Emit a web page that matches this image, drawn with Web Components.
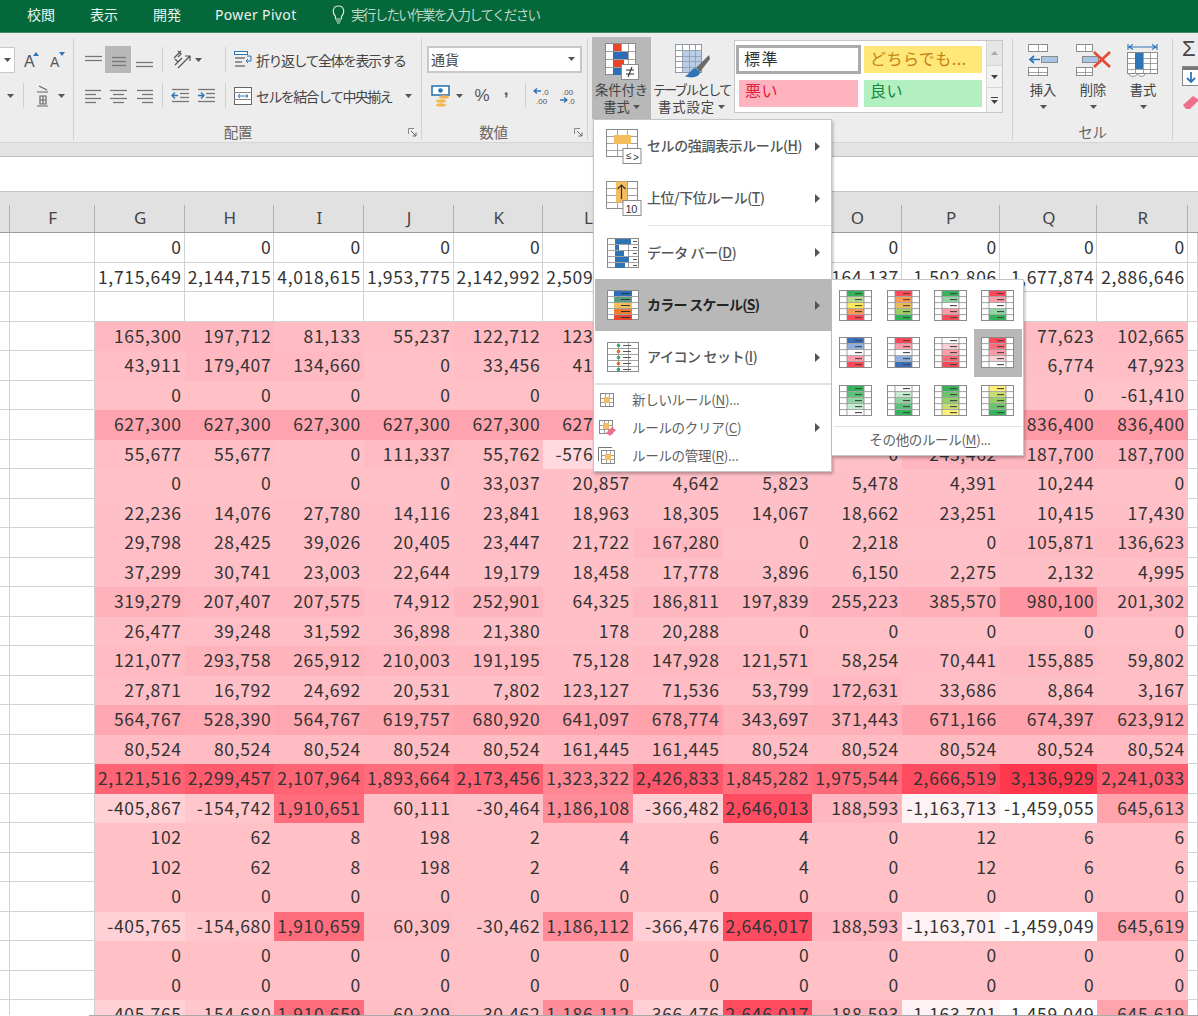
<!DOCTYPE html>
<html lang="ja">
<head>
<meta charset="utf-8">
<title>Excel</title>
<style>
html,body{margin:0;padding:0;background:#fff;overflow:hidden;height:1016px}
x-app{--f:"Noto Sans CJK JP","Noto Sans",sans-serif;font-family:var(--f);color:#444}
</style>
</head>
<body>
<x-app></x-app>
<script>
const G='#8b8b8b';
const svg=(w,h,b,st='')=>`<svg width="${w}" height="${h}" viewBox="0 0 ${w} ${h}" style="display:block;flex:none;${st}">${b}</svg>`;
const lines=(arr,c='#777')=>arr.map(a=>`<path d="M${a[0]} ${a[2]+.5}H${a[1]}" stroke="${a[3]||c}" stroke-width="1.3"/>`).join('');
const caret=(c='#555')=>svg(7,4,`<path d="M0 0H7L3.5 4Z" fill="${c}"/>`);
const gridLines=(x,y,w,h,cols,rows,c=G)=>{
  let s=`<rect x="${x+.5}" y="${y+.5}" width="${w-1}" height="${h-1}" fill="#fff" stroke="${c}"/>`;
  for(let i=1;i<cols;i++){const X=x+Math.round(w*i/cols)+.5;s+=`<path d="M${X} ${y}V${y+h}" stroke="${c}" stroke-width=".8"/>`}
  for(let i=1;i<rows;i++){const Y=y+Math.round(h*i/rows)+.5;s+=`<path d="M${x} ${Y}H${x+w}" stroke="${c}" stroke-width=".8"/>`}
  return s};
function def(name,css,html,disp='block'){
  customElements.define(name,class extends HTMLElement{
    constructor(){super();const r=this.attachShadow({mode:'open'});
      r.innerHTML=`<style>:host{display:${disp};box-sizing:border-box}*{box-sizing:border-box}${css}</style>`+(typeof html==='function'?html(this):html)}
  })}

/* ---------- icons ---------- */
const ICON={
 cf:svg(36,37,gridLines(1,0,31,32,4,4)+
   `<rect x="9" y="1" width="8" height="7" fill="#e8442a"/>
    <rect x="9" y="9" width="15" height="7" fill="#2f6db5"/><rect x="9" y="17" width="11" height="7" fill="#e8442a"/><rect x="9" y="25" width="8" height="7" fill="#2f6db5"/>
    <rect x="17.5" y="21.5" width="17" height="15" fill="#fff" stroke="${G}"/>
    <path d="M22 27H30M22 31H30M28 24L24 34" stroke="#333" stroke-width="1.1" fill="none"/>`),
 tbl:svg(36,36,gridLines(1,1,27,29,4,5,'#8e99a8')+
   `<rect x="8" y="7" width="20" height="23" fill="#b9cde6"/>`+gridLines(1,1,27,29,4,5,'#8e99a8').replace(/fill="#fff"/,'fill="none"')+
   `<path d="M35 12L22 25L26 29L36 16Z" fill="#6b6b6b"/><path d="M21 25C16 27 16 31 11 33C17 36 26 34 26 29Z" fill="#2e75b6"/>`),
 ins:svg(32,34,gridLines(1,1,20,8,2,1)+gridLines(1,24,20,9,2,2)+gridLines(14,13,17,7,2,1)+
   `<rect x="15" y="14" width="15" height="5" fill="#a9c4e4"/><path d="M13 16.5H3M7 13L3 16.5L7 20" stroke="#2e75b6" stroke-width="1.7" fill="none"/>`),
 del:svg(37,34,gridLines(1,1,17,8,2,1)+gridLines(1,24,17,9,2,2)+gridLines(7,13,17,7,2,1)+
   `<rect x="8" y="14" width="15" height="5" fill="#a9c4e4"/><path d="M19 9L35 24M35 9L19 24" stroke="#e8482f" stroke-width="2.6"/>`),
 fmt:svg(34,36,`<path d="M2 1V7M31 1V7M3 4H30M7 1.5L3 4L7 6.5M26 1.5L30 4L26 6.5" stroke="#2e75b6" stroke-width="1.1" fill="none"/>`+gridLines(1,9,31,22,4,4)+
   `<rect x="9" y="10" width="8" height="16" fill="#2e75b6"/><path d="M3 31C3 34 11 34 11 31M12 31C12 34 19 34 19 31" stroke="${G}" fill="#fff"/>`),
 hl:svg(37,36,gridLines(1,1,32,28,3,4)+`<rect x="9" y="7" width="17" height="9" fill="#f4bd5f"/>
   <rect x="18" y="20.5" width="18" height="15" fill="#fff" stroke="${G}"/><text x="21" y="31" font-size="10" fill="#333" font-family="Liberation Sans">≤</text><text x="28" y="33" font-size="10" fill="#333" font-family="Liberation Sans">&gt;</text>`),
 top:svg(37,36,gridLines(1,1,32,28,3,4)+`<rect x="11" y="1.5" width="11" height="21" fill="#f4bd5f"/><path d="M16.5 19V5M12.5 9L16.5 5L20.5 9" stroke="#333" stroke-width="1.2" fill="none"/>
   <rect x="18" y="20.5" width="18" height="15" fill="#fff" stroke="${G}"/><text x="20.5" y="32.5" font-size="11" fill="#333" font-family="Liberation Sans">10</text>`),
 bar:svg(34,32,gridLines(1,1,32,30,3,5)+[16,4,9,14,10].map((w,i)=>`<rect x="9" y="${2+i*6}" width="${w}" height="5" fill="#2e75b6"/><path d="M27 ${4.5+i*6}H31" stroke="#555"/>`).join('')),
 scale:svg(34,32,gridLines(1,1,32,30,3,5)+['#2e6fbb','#5a9e80','#f2bd5c','#ee7a2e','#e4472f'].map((c,i)=>`<rect x="8" y="${2+i*6}" width="18" height="5" fill="${c}"/><path d="M15 ${4.5+i*6}H24" stroke="#333"/>`).join('')),
 iconset:svg(34,32,gridLines(1,1,32,30,3,5)+['#3fa373','#ee6a1e','#3fa373','#ee6a1e','#3fa373'].map((c,i)=>`<circle cx="12.5" cy="${4.5+i*6}" r="1.8" fill="${c}"/><path d="M17 ${4.5+i*6}H25" stroke="#555"/>`).join('')),
 nw:svg(16,16,gridLines(1,1,14,14,3,3,'#888')+`<rect x="5" y="5" width="6" height="6" fill="#f4bd5f"/>`),
 clr:svg(18,18,gridLines(1,1,14,14,3,3,'#888')+`<rect x="5" y="4" width="6" height="6" fill="#f4bd5f"/><path d="M8 14L14 8L18 11L12 17Z" fill="#ee6f8d"/>`),
 mgr:svg(18,18,`<path d="M.5 14V.5H14" stroke="#777" fill="none"/>`+gridLines(3,3,14,14,3,3,'#888')+`<rect x="7" y="7" width="6" height="6" fill="#f4bd5f"/>`),
};
const mini=(cs)=>svg(33,31,`<rect x=".5" y=".5" width="32" height="30" fill="#fff" stroke="#8a8a8a"/>`+
  cs.map((c,i)=>{const y=1+i*6;return `<rect x="8" y="${y}" width="17" height="5.2" fill="${c}"/><path d="M1 ${y+5.6}H32" stroke="#8a8a8a" stroke-width=".8"/><path d="M16 ${y+2.6}H23" stroke="#444" stroke-width="1.1"/>`}).join('')+
  `<path d="M8 1V30M25 1V30" stroke="#8a8a8a" stroke-width=".8"/>`);

/* row helper: places items in flow with computed gaps, from the group's left x */
const row=(start,items)=>{let x=start,h='';for(const [ax,w,c,st] of items){h+=`<span style="flex:none;display:flex;align-items:center;justify-content:${w>60?'flex-start':'center'};height:27px;margin-left:${ax-x}px;width:${w}px;${st||''}">${c}</span>`;x=ax+w}return `<div class="row">${h}</div>`};
const sep=`<i style="display:block;width:1px;height:25px;background:#cfcfcf"></i>`;
const rowCss=`.row{display:flex;height:27px;align-items:center;white-space:nowrap}
.rows{display:flex;flex-direction:column;gap:9px;padding-top:8px}
.t{font-size:14px;color:#444}`;

/* ---------- generic parts ---------- */
def('x-titlebar',`:host{height:33px;background:#05683a;color:#eaf3ee;display:flex;align-items:center;font-size:14px;padding:0 0 4px 27px;border-bottom:1px solid #3f8a63}
span{flex:none;white-space:nowrap}`,
`<span style="width:63px">校閲</span><span style="width:63px">表示</span><span style="width:62px">開発</span><span style="width:116px;font-family:'Noto Sans',sans-serif;letter-spacing:.35px">Power Pivot</span>
${svg(15,20,`<path d="M4.5 12.5C1 9 1.5 2 7.5 2S14 9 10.5 12.5V15H4.5ZM5 17H10M6 19H9" stroke="#dbe8e0" fill="none" stroke-width="1.1"/>`,'margin-right:5px')}
<span style="font-size:13.5px;letter-spacing:-1.68px;color:#bcd6c7">実行したい作業を入力してください</span>`,'flex');

def('x-rgroup',`:host{flex:none;margin:5px 0 3px;height:102px;border-right:1px solid #d2d2d2;position:relative;display:flex;flex-direction:column}
.c{flex:1;min-height:0}
.l{height:18px;text-align:center;font-size:14.5px;color:#666;line-height:20px;letter-spacing:-.2px}
.k{position:absolute;right:4px;bottom:3px;display:block}`,
t=>`<div class="c"><slot></slot></div><div class="l" style="padding-right:${t.getAttribute('lpad')||0}px">${t.getAttribute('label')||''}</div>${t.hasAttribute('launcher')?svg(9,9,`<path d="M.5 6V.5H6" stroke="#888" fill="none"/><path d="M3 3L8 8M8 4.5V8H4.5" stroke="#666" fill="none"/>`,'').replace('<svg','<svg class="k"'):''}`);

def('x-bigbtn',`:host{flex:none;display:flex;flex-direction:column;align-items:center;font-size:13.3px;line-height:17px;color:#444;height:82px;text-align:center;white-space:nowrap}
:host([on]){background:#b8b8b8}
.i{height:44px;display:flex;align-items:flex-start;padding-top:6px;justify-content:center;flex:none}
.b{display:flex;align-items:center;gap:3px;justify-content:center;height:17px}`,
t=>{const a=(t.getAttribute('text')||'').split('|');const ls=(t.getAttribute('ls')||'0|0').split('|');const k=ICON[t.getAttribute('icon')];const lc=t.hasAttribute('lonecaret');
 return `<div class="i">${k}</div>`+a.map((s,i)=>`<div class="b" style="letter-spacing:${ls[i]||0}px">${s}${i==a.length-1&&!lc?caret():''}</div>`).join('')+(lc?`<div class="b">${caret()}</div>`:'')});

def('x-gallery',`:host{flex:none;width:269px;height:73px;margin:2px 0 0 -1px;background:#fff;border:1px solid #c6c6c6;display:flex}
.g{flex:1;display:grid;grid-template-columns:125px 118px;grid-template-rows:29px 27px;column-gap:3px;row-gap:6px;padding:4px 0 0 1px;font-size:16px;line-height:1}
.g div{display:flex;align-items:center;padding:0 0 4px 6px;white-space:nowrap}
.n{border:3px solid #ababab;background:#fff;color:#333;padding:0 0 3px 5px!important;letter-spacing:1.6px}
.y{background:#ffe877;color:#c4800f;margin:1px 0 1px;letter-spacing:.45px}
.b{background:#ffb3bf;color:#e0213c;margin-left:3px;margin-right:3px;letter-spacing:.5px;padding-bottom:8px!important}
.o{background:#b2f0c2;color:#18873a;letter-spacing:.5px;padding-bottom:8px!important}
.s{width:16px;border-left:1px solid #d6d6d6;display:flex;flex-direction:column;flex:none}
.s span{display:flex;align-items:center;justify-content:center;flex-direction:column;gap:2px;border-bottom:1px solid #d6d6d6;background:#f2f2f2}`,
`<div class="g"><div class="n">標準</div><div class="y">どちらでも...</div><div class="b">悪い</div><div class="o">良い</div></div>
<div class="s"><span style="height:25px;background:#e6e6e6">${svg(7,4,'<path d="M0 4H7L3.5 0Z" fill="#aaa"/>')}</span><span style="height:22px">${caret('#444')}</span><span style="height:24px;border:0"><i style="display:block;width:7px;height:1px;background:#444"></i>${caret('#444')}</span></div>`);

def('x-select',`:host{display:flex;align-items:center;justify-content:space-between;height:27px;width:155px;background:#fff;border:2px solid #c8c8c8;font-size:14px;padding:0 5px 2px 2px;color:#444}`,
`<span><slot></slot></span>${caret()}`);

/* ---------- ribbon ---------- */
const A=(up)=>svg(15,16,`<text x="0" y="15" font-size="${up?16:14}" fill="#555" font-family="Liberation Sans">A</text><path d="${up?'M9 4L12 0L15 4Z':'M9 0H15L12 4Z'}" fill="#2e75b6"/>`);
const ribbonFont=`<div class="rows">`+row(0,[[0,15,`<span style="width:15px;height:26px;background:#fff;border:1.5px solid #c8c8c8;border-left:0;display:flex;align-items:center;justify-content:center">${caret()}</span>`],[24,15,A(true)],[50,15,A(false)]])+
 row(0,[[6,8,caret()],[23,1,sep],[36,13,svg(13,22,`<path d="M3 1L11 5M1 7H12M4 11H10V19H4ZM4 15H10M7 11V19M1 21H12" stroke="#666" fill="none" stroke-width="1.2"/>`)],[58,7,caret()]])+`</div>`;
const L=(b)=>svg(19,18,lines(b));
const ribbonAlign=`<div class="rows">`+row(74,[
  [84,18,L([[1,18,5],[1,18,9]])],[105,26,L([[3,17,6],[3,17,10],[3,17,14]]),'background:#b8b8b8'],[135,18,L([[1,18,11],[1,18,15]])],[162,1,sep],
  [172,20,svg(20,20,`<path d="M2 8L9 1M6 1L9 4L6 7M3 9L6 12M10 8L3 15M6 18L18 6M13 6H18V11" stroke="#555" fill="none" stroke-width="1.2"/>`)],[195,7,caret()],[225,1,sep],
  [234,18,svg(18,18,`<rect x=".5" y=".5" width="13" height="3" fill="#fff" stroke="#2e75b6"/><path d="M1 7H11M1 11H8M1 15H11" stroke="#777" stroke-width="1.3"/><path d="M13 5H17V10H12M14 8L12 10L14 12" stroke="#2e75b6" fill="none"/>`)],
  [256,150,`<span class="t" style="letter-spacing:-1.5px">折り返して全体を表示する</span>`]])+
 row(74,[[84,18,L([[1,17,3],[1,12,7],[1,17,11],[1,12,15]])],[109,18,L([[1,18,3],[4,15,7],[1,18,11],[4,15,15]])],[135,18,L([[2,18,3],[7,18,7],[2,18,11],[7,18,15]])],[162,1,sep],
  [171,19,svg(19,18,lines([[1,18,2],[9,18,6],[9,18,10],[1,18,14]])+`<path d="M7 8.5H1M4 5.5L1 8.5L4 11.5" stroke="#2e75b6" fill="none" stroke-width="1.4"/>`)],
  [197,19,svg(19,18,lines([[1,18,2],[9,18,6],[9,18,10],[1,18,14]])+`<path d="M1 8.5H7M4 5.5L7 8.5L4 11.5" stroke="#2e75b6" fill="none" stroke-width="1.4"/>`)],[225,1,sep],
  [234,18,svg(18,18,`<rect x=".5" y=".5" width="17" height="17" fill="#fff" stroke="#666"/><path d="M0 5.5H18M0 12.5H18" stroke="#888"/><path d="M4 9H14M6 7L4 9L6 11M12 7L14 9L12 11" stroke="#2e75b6" fill="none"/>`)],
  [256,140,`<span class="t" style="letter-spacing:-1.6px">セルを結合して中央揃え</span>`],[405,7,caret()]])+`</div>`;
const dec=(flip)=>svg(20,18,`<text x="${flip?3:9}" y="8" font-size="8" fill="#555" font-family="Liberation Sans">${flip?'.00':'.0'}</text><text x="${flip?9:3}" y="17" font-size="8" fill="#555" font-family="Liberation Sans">${flip?'.0':'.00'}</text><path d="${flip?'M1 13H8M5 10.5L8 13L5 15.5':'M8 4H1M4 1.5L1 4L4 6.5'}" stroke="#2e75b6" fill="none" stroke-width="1.3"/>`);
const ribbonNum=`<div class="rows">`+row(422,[[427,155,`<x-select>通貨</x-select>`]])+
 row(422,[[431,19,svg(19,22,`<rect x="1" y="1" width="17" height="9" fill="#fff" stroke="#2e75b6" stroke-width="1.6"/><circle cx="9.5" cy="5.5" r="2.3" fill="#2e75b6"/><ellipse cx="13" cy="12" rx="5" ry="1.7" fill="#f2b84f"/><ellipse cx="10" cy="16" rx="5" ry="1.7" fill="#f2b84f"/><ellipse cx="10" cy="20" rx="5" ry="1.7" fill="#f2b84f"/>`)],[456,7,caret()],
  [473,18,`<span style="font-size:17px;color:#555;font-family:'Liberation Sans'">%</span>`],[502,8,`<span style="font-size:17px;font-weight:700;color:#555;font-family:'Liberation Sans';margin-top:-12px">,</span>`],[525,1,sep],[533,20,dec(false)],[559,20,dec(true)]])+`</div>`;

def('x-ribbon',`:host{height:110px;background:#ededed;display:flex;border-bottom:1px solid #d6d6d6;overflow:hidden;font-family:var(--f)}${rowCss}
.big{display:flex;align-items:flex-start}
.edit{display:flex;flex-direction:column;padding:0 0 0 9px}`,
`<x-rgroup style="width:74px">${ribbonFont}</x-rgroup>
<x-rgroup style="width:348px" label="配置" lpad="19" launcher>${ribbonAlign}</x-rgroup>
<x-rgroup style="width:166px" label="数値" lpad="22" launcher>${ribbonNum}</x-rgroup>
<x-rgroup style="width:425px"><div class="big">
  <x-bigbtn on icon="cf" text="条件付き|書式" style="width:59px;margin:-1px 0 0 4px"></x-bigbtn>
  <x-bigbtn icon="tbl" text="テーブルとして|書式設定" ls="-2.1|.9" style="width:77px;margin:-1px 5px 0 2px"></x-bigbtn>
  <x-gallery></x-gallery></div></x-rgroup>
<x-rgroup style="width:160px" label="セル"><div class="big" style="padding-left:5px">
  <x-bigbtn icon="ins" text="挿入" lonecaret style="width:50px;margin-top:-1px"></x-bigbtn>
  <x-bigbtn icon="del" text="削除" lonecaret style="width:50px;margin-top:-1px"></x-bigbtn>
  <x-bigbtn icon="fmt" text="書式" lonecaret style="width:50px;margin-top:-1px"></x-bigbtn></div></x-rgroup>
<div class="edit"><span style="font-family:'Liberation Sans';font-size:22px;line-height:24px;margin-top:4px;color:#444">Σ</span>
  ${svg(18,20,`<rect x=".5" y=".5" width="17" height="19" fill="#fff" stroke="#888"/><rect x="1" y="1" width="16" height="3" fill="#777"/><path d="M9 6V16M5 12L9 16L13 12" stroke="#2e75b6" stroke-width="1.8" fill="none"/>`,'margin-top:5px')}
  ${svg(18,16,`<path d="M1 11L11 2L17 6L8 15H4Z" fill="#ee6f8d"/>`,'margin-top:8px')}</div>`,'flex');

/* ---------- formula strip ---------- */
def('x-formula',`:host{height:49px;display:flex;flex-direction:column}
.a{height:14px;background:#e3e3e3;border-bottom:1.5px solid #bdbdbd}
.b{flex:1;background:#fff;border-bottom:1.5px solid #c4c4c4}`,`<div class="a"></div><div class="b"></div>`);

/* ---------- sheet ---------- */
const COLS='10px 85px repeat(9,89.67px) 98px 97.5px 90.5px 10px';
const DATA=[
['0','0','0','0','0','0','','','0','0','0','0'],
['1,715,649','2,144,715','4,018,615','1,953,775','2,142,992','2,509,310','','','164,137','1,502,806','1,677,874','2,886,646'],
['','','','','','','','','','','',''],
['165,300','197,712','81,133','55,237','122,712','123,540','','','','','77,623','102,665'],
['43,911','179,407','134,660','0','33,456','41,720','','','','','6,774','47,923'],
['0','0','0','0','0','','','','','','0','-61,410'],
['627,300','627,300','627,300','627,300','627,300','627,300','','','','','836,400','836,400'],
['55,677','55,677','0','111,337','55,762','-576,210','','','0','243,462','187,700','187,700'],
['0','0','0','0','33,037','20,857','4,642','5,823','5,478','4,391','10,244','0'],
['22,236','14,076','27,780','14,116','23,841','18,963','18,305','14,067','18,662','23,251','10,415','17,430'],
['29,798','28,425','39,026','20,405','23,447','21,722','167,280','0','2,218','0','105,871','136,623'],
['37,299','30,741','23,003','22,644','19,179','18,458','17,778','3,896','6,150','2,275','2,132','4,995'],
['319,279','207,407','207,575','74,912','252,901','64,325','186,811','197,839','255,223','385,570','980,100','201,302'],
['26,477','39,248','31,592','36,898','21,380','178','20,288','0','0','0','0','0'],
['121,077','293,758','265,912','210,003','191,195','75,128','147,928','121,571','58,254','70,441','155,885','59,802'],
['27,871','16,792','24,692','20,531','7,802','123,127','71,536','53,799','172,631','33,686','8,864','3,167'],
['564,767','528,390','564,767','619,757','680,920','641,097','678,774','343,697','371,443','671,166','674,397','623,912'],
['80,524','80,524','80,524','80,524','80,524','161,445','161,445','80,524','80,524','80,524','80,524','80,524'],
['2,121,516','2,299,457','2,107,964','1,893,664','2,173,456','1,323,322','2,426,833','1,845,282','1,975,544','2,666,519','3,136,929','2,241,033'],
['-405,867','-154,742','1,910,651','60,111','-30,464','1,186,108','-366,482','2,646,013','188,593','-1,163,713','-1,459,055','645,613'],
['102','62','8','198','2','4','6','4','0','12','6','6'],
['102','62','8','198','2','4','6','4','0','12','6','6'],
['0','0','0','0','0','0','0','0','0','0','0','0'],
['-405,765','-154,680','1,910,659','60,309','-30,462','1,186,112','-366,476','2,646,017','188,593','-1,163,701','-1,459,049','645,619'],
['0','0','0','0','0','0','0','0','0','0','0','0'],
['0','0','0','0','0','0','0','0','0','0','0','0'],
['-405,765','-154,680','1,910,659','60,309','-30,462','1,186,112','-366,476','2,646,017','188,593','-1,163,701','-1,459,049','645,619'],
];
const MIN=-1459055,MAX=3136929;
const colour=s=>{const v=parseInt((s||'0').replace(/,/g,''),10)||0;const f=(v-MIN)/(MAX-MIN);return `rgb(255,${Math.round(255-200*f)},${Math.round(255-178*f)})`};
const sheetHtml=()=>{
 let h=`<div class="hd"><i></i>`+'F G H I J K L M N O P Q R'.split(' ').map(c=>`<b>${c}</b>`).join('')+`<i></i></div><div class="gr">`;
 DATA.forEach((r,ri)=>{
  h+=`<div class="c"></div><div class="c"></div>`;
  r.forEach(v=>{const col=ri>2;h+=`<div class="c${col?' p':''}"${col?` style="background:${colour(v)}"`:''}>${v}</div>`});
  h+=`<div class="c"></div>`;
 });
 return h+`</div><div class="end"><i></i></div>`};
def('x-sheet',`:host{height:825px;overflow:hidden;position:relative;font-family:var(--f);display:flex;flex-direction:column}
.hd{height:41px;flex:none;background:#e1e1e1;display:grid;grid-template-columns:${COLS};align-items:end;border-bottom:1.5px solid #9b9b9b}
.hd b{height:27px;font-weight:400;font-size:17px;font-family:"Noto Sans",sans-serif;line-height:26px;text-align:center;color:#444;border-right:1.5px solid #b1b1b1;padding-left:1.5px}
.hd i{height:27px;border-right:1.5px solid #b1b1b1}.hd i:last-child{border:0}
.gr{height:782px;flex:none;overflow:hidden;display:grid;grid-template-columns:${COLS};grid-auto-rows:29.5px;background:#fff}
.c{border-right:1.5px solid #d2d2d2;border-bottom:1.5px solid #d2d2d2;font-size:17.5px;letter-spacing:.66px;line-height:27.5px;text-align:right;padding-right:2px;color:#333;white-space:nowrap;overflow:hidden}
.c.p{border-color:transparent}
.end{height:2px;flex:none;display:flex}.end i{margin-left:89px;flex:1;background:#a9a9a9}`,sheetHtml());

/* ---------- menus ---------- */
def('x-mi',`:host{display:flex;align-items:center;color:#555;white-space:nowrap;margin-left:1px}
:host([big]){height:52px;font-size:14px;font-weight:500;letter-spacing:-.4px}
:host(:not([big])){height:28px;font-size:13.5px;letter-spacing:-.3px;color:#5f5f5f}
:host([on]){background:#b8b8b8;color:#222;font-weight:700;letter-spacing:-.75px}
.ic{flex:none;display:flex;align-items:center;justify-content:center}
:host([big]) .ic{width:36px;margin:0 6px 0 10px}
:host(:not([big])) .ic{width:18px;margin:0 16px 0 3px}
.tx{padding-bottom:2px}
u{text-underline-offset:2px}
.ar{margin-left:auto;margin-right:11px;flex:none}`,
t=>{const m=(t.getAttribute('text')).match(/^(.*)\((.)\)(.*)$/);
 return `<span class="ic">${ICON[t.getAttribute('icon')]}</span><span class="tx">${m[1]}(<u>${m[2]}</u>)${m[3]}</span>`+(t.hasAttribute('sub')?`<span class="ar">${svg(5,9,'<path d="M0 0L5 4.5L0 9Z" fill="#555"/>')}</span>`:'')});
def('x-cfmenu',`:host{position:absolute;left:593px;top:119px;width:239px;height:353px;background:#fff;border:1px solid #c6c6c6;box-shadow:1px 2px 3px rgba(0,0,0,.28);font-family:var(--f);z-index:5}
.s{height:1.5px;background:#e2e2e2}`,
`<x-mi big icon="hl" sub text="セルの強調表示ルール(H)"></x-mi>
<x-mi big icon="top" sub text="上位/下位ルール(T)"></x-mi>
<div class="s" style="margin:.5px 0 .5px 54px"></div>
<x-mi big icon="bar" sub text="データ バー(D)"></x-mi>
<x-mi big on icon="scale" sub text="カラー スケール(S)" style="margin-top:.5px"></x-mi>
<x-mi big icon="iconset" sub text="アイコン セット(I)"></x-mi>
<div class="s" style="margin:0 0 1px 1px"></div>
<x-mi icon="nw" text="新しいルール(N)..."></x-mi>
<x-mi icon="clr" sub text="ルールのクリア(C)"></x-mi>
<x-mi icon="mgr" text="ルールの管理(R)..."></x-mi>`);
const SC=[
['#33b35a','#b9dd90','#ffeb5a','#ff9a55','#ff4858'],['#ff4858','#ff9a55','#e9ba5c','#9bd060','#33b35a'],['#33b35a','#90d6a2','#ffffff','#ff9aa8','#ff4858'],['#ff4858','#ff9aa8','#ffffff','#90d6a2','#33b35a'],
['#3a6fb8','#8fb0dd','#ffffff','#ff9aa8','#ff4858'],['#ff4858','#ff9aa8','#ffffff','#8fb0dd','#3a6fb8'],['#ffffff','#ffcfd6','#ff9aa8','#ff6a78','#ff4858'],['#ff4858','#ff6a78','#ff9aa8','#ffcfd6','#ffffff'],
['#33b35a','#5cc47a','#90d6a2','#c5ecd1','#ffffff'],['#ffffff','#c5ecd1','#90d6a2','#5cc47a','#33b35a'],['#33b35a','#6cc46a','#94d064','#c8e070','#fff07a'],['#fff07a','#c8e070','#94d064','#6cc46a','#33b35a']];
def('x-scalemenu',`:host{position:absolute;left:832px;top:279px;width:192px;height:177px;background:#fff;border:1px solid #c6c6c6;border-left:0;box-shadow:1px 2px 3px rgba(0,0,0,.28);font-family:var(--f);z-index:6}
.g{display:grid;grid-template-columns:repeat(4,47.4px);grid-template-rows:repeat(3,47.3px);padding:2px 0 0 0}
.g span{display:flex;align-items:center;justify-content:center}
.g span.on{background:#b8b8b8}
.s{height:1.5px;background:#e2e2e2;margin:2px 1px 0 2px}
.m{text-align:center;font-size:13.5px;letter-spacing:-.35px;color:#5f5f5f;line-height:25px;padding-left:5px}
u{text-underline-offset:2px}`,
`<div class="g">${SC.map((c,i)=>`<span class="${i==7?'on':''}">${mini(c)}</span>`).join('')}</div><div class="s"></div><div class="m">その他のルール(<u>M</u>)...</div>`);

def('x-app',`:host{display:block;position:relative;width:1198px;height:1016px;overflow:hidden}`,
`<x-titlebar></x-titlebar><x-ribbon></x-ribbon><x-formula></x-formula><x-sheet></x-sheet><x-cfmenu></x-cfmenu><x-scalemenu></x-scalemenu>`);
</script>
</body>
</html>
